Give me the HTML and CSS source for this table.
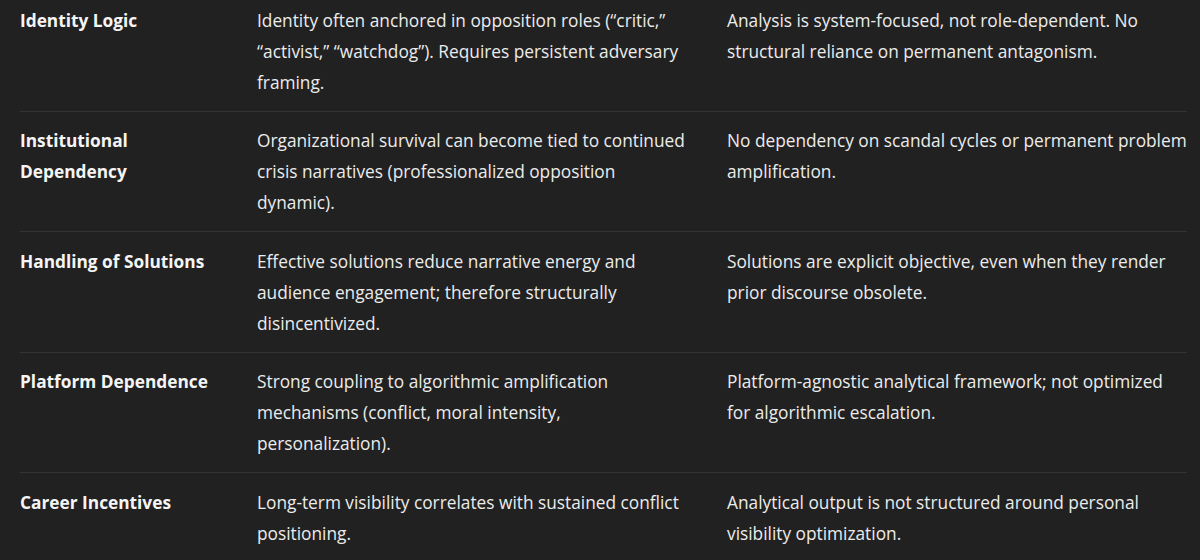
FILE: index.html
```html
<!DOCTYPE html>
<html lang="en">
<head>
<meta charset="utf-8">
<link rel="stylesheet" href="styles.css">
</head>
<body>
<div class="table">
  <div class="row">
    <div class="cell label">Identity Logic</div>
    <div class="cell">Identity often anchored in opposition roles (“critic,” “activist,” “watchdog”). Requires persistent adversary framing.</div>
    <div class="cell">Analysis is system-focused, not role-dependent. No structural reliance on permanent antagonism.</div>
  </div>
  <div class="row">
    <div class="cell label">Institutional Dependency</div>
    <div class="cell">Organizational survival can become tied to continued crisis narratives (professionalized opposition dynamic).</div>
    <div class="cell">No dependency on scandal cycles or permanent problem amplification.</div>
  </div>
  <div class="row">
    <div class="cell label">Handling of Solutions</div>
    <div class="cell">Effective solutions reduce narrative energy and audience engagement; therefore structurally disincentivized.</div>
    <div class="cell">Solutions are explicit objective, even when they render prior discourse obsolete.</div>
  </div>
  <div class="row">
    <div class="cell label">Platform Dependence</div>
    <div class="cell">Strong coupling to algorithmic amplification mechanisms (conflict, moral intensity, personalization).</div>
    <div class="cell">Platform-agnostic analytical framework; not optimized for algorithmic escalation.</div>
  </div>
  <div class="row last">
    <div class="cell label">Career Incentives</div>
    <div class="cell">Long-term visibility correlates with sustained conflict positioning.</div>
    <div class="cell">Analytical output is not structured around personal visibility optimization.</div>
  </div>
</div>
</body>
</html>
```

FILE: styles.css
```css
html, body {
  margin: 0;
  padding: 0;
  background: #212121;
  height: 100%;
  overflow: hidden;
}

body {
  font-family: "Open Sans", "Noto Sans", sans-serif;
  font-size: 17.3px;
  line-height: 31px;
  color: #ececec;
}

.table {
  margin: -9px 0 0 20px;
  width: 1167px;
}

.row {
  display: grid;
  grid-template-columns: 237px 470px 1fr;
  border-bottom: 1px solid #333333;
  padding: 13.6px 0 13px;
}

.row.last {
  border-bottom: none;
}

.cell {
  padding-right: 30px;
}

.cell:last-child {
  padding-right: 0;
}

.label {
  font-weight: 700;
  color: #f5f5f5;
}
```
